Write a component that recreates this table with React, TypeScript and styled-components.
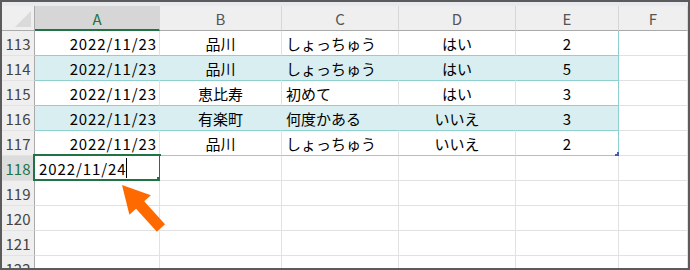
import styled, { createGlobalStyle } from 'styled-components';

const GlobalStyle = createGlobalStyle`
  html, body {
    margin: 0;
    padding: 0;
    background: #fff;
  }
  * {
    box-sizing: border-box;
  }
`;

const GREEN = '#217346';
const TEAL = '#8ecfcf';
const BAND = '#d9eef0';
const GRID = '#e1e1e1';

const Frame = styled.div`
  position: relative;
  width: 690px;
  height: 270px;
  border: 2px solid #5b5b5b;
  overflow: hidden;
  background: #fff;
  font-family: 'Noto Sans CJK JP', 'Noto Sans', sans-serif;
`;

const Strip = styled.div`
  height: 4px;
  background: #e7e9ee;
`;

const Sheet = styled.div`
  display: grid;
  grid-template-columns: 33px 125px 122px 117px 117px 103px 69px;
  grid-auto-rows: 25px;
`;

const Corner = styled.div`
  position: relative;
  background: #efefef;
  border-right: 1px solid #a9a9a9;
  border-bottom: 1px solid #a9a9a9;

  &::after {
    content: '';
    position: absolute;
    right: 3px;
    bottom: 3px;
    width: 16px;
    height: 16px;
    background: #dadada;
    clip-path: polygon(100% 0, 100% 100%, 0 100%);
  }
`;

const ColHead = styled.div<{ $active?: boolean }>`
  display: flex;
  align-items: center;
  justify-content: center;
  background: ${(p) => (p.$active ? '#d6d6d6' : '#efefef')};
  color: ${(p) => (p.$active ? GREEN : '#555')};
  font-size: 15px;
  border-right: 1px solid #d6d6d6;
  border-bottom: ${(p) => (p.$active ? `2px solid ${GREEN}` : '1px solid #a9a9a9')};
  padding-top: ${(p) => (p.$active ? '1px' : '0')};
`;

const RowHead = styled.div<{ $active?: boolean }>`
  display: flex;
  align-items: center;
  justify-content: center;
  background: ${(p) => (p.$active ? '#dcdcdc' : '#efefef')};
  color: ${(p) => (p.$active ? GREEN : '#444')};
  font-size: 15px;
  border-right: 1px solid #a9a9a9;
  border-bottom: 1px solid #e2e2e2;
`;

type Align = 'left' | 'center' | 'right';

const Cell = styled.div<{
  $align?: Align;
  $band?: boolean;
  $inTable?: boolean;
  $lastCol?: boolean;
}>`
  position: relative;
  display: flex;
  align-items: center;
  justify-content: ${(p) =>
    p.$align === 'right' ? 'flex-end' : p.$align === 'center' ? 'center' : 'flex-start'};
  padding: ${(p) => (p.$align === 'right' ? '0 2px 0 0' : p.$align === 'left' ? '0 0 0 4px' : '0')};
  font-size: 15px;
  color: #000;
  white-space: nowrap;
  background: ${(p) => (p.$band ? BAND : '#fff')};
  border-right: 1px solid
    ${(p) => (p.$lastCol ? TEAL : p.$band ? BAND : GRID)};
  border-bottom: 1px solid ${(p) => (p.$inTable ? TEAL : GRID)};
`;

const Digits = styled.span`
  letter-spacing: 0.9px;
`;

const Selection = styled.div`
  position: absolute;
  top: -2px;
  left: -2px;
  right: -2px;
  bottom: -1px;
  border: 2px solid ${GREEN};
  pointer-events: none;
`;

const FillHandle = styled.div`
  position: absolute;
  right: -3px;
  bottom: -3px;
  width: 5px;
  height: 5px;
  background: ${GREEN};
`;

const Caret = styled.span`
  display: inline-block;
  width: 1px;
  height: 20px;
  margin-left: 0;
  background: #000;
`;

const ResizeHandle = styled.div`
  position: absolute;
  right: -1px;
  bottom: -1px;
  width: 4px;
  height: 4px;
  background: #4a5aad;
  clip-path: polygon(100% 0, 100% 100%, 0 100%, 0 50%, 50% 50%, 50% 0);
`;

const Overlay = styled.svg`
  position: absolute;
  left: 0;
  top: 0;
  pointer-events: none;
`;

const columns = ['A', 'B', 'C', 'D', 'E', 'F'];

const records = [
  { n: 113, date: '2022/11/23', place: '品川', visits: 'しょっちゅう', ok: 'はい', score: '2' },
  { n: 114, date: '2022/11/23', place: '品川', visits: 'しょっちゅう', ok: 'はい', score: '5' },
  { n: 115, date: '2022/11/23', place: '恵比寿', visits: '初めて', ok: 'はい', score: '3' },
  { n: 116, date: '2022/11/23', place: '有楽町', visits: '何度かある', ok: 'いいえ', score: '3' },
  { n: 117, date: '2022/11/23', place: '品川', visits: 'しょっちゅう', ok: 'いいえ', score: '2' },
];

const emptyRows = [119, 120, 121, 122];

// orange pointer aimed at the edited cell
const Arrow = () => (
  <Overlay width={686} height={266} viewBox='2 2 686 266'>
    <g transform='translate(122 185) rotate(47.8)'>
      <polygon
        points='0,0 27,-14.5 27,-5.5 58,-5.5 58,5.5 27,5.5 27,14.5'
        fill='#ff6a00'
      />
    </g>
  </Overlay>
);

const App = () => {
  return (
    <>
      <GlobalStyle />
      <Frame>
        <Strip />
        <Sheet>
          <Corner />
          {columns.map((c) => (
            <ColHead key={c} $active={c === 'A'}>
              {c}
            </ColHead>
          ))}

          {records.map((r, i) => {
            const band = i % 2 === 1;
            return [
              <RowHead key={`h${r.n}`}>{r.n}</RowHead>,
              <Cell key={`a${r.n}`} $align='right' $band={band} $inTable>
                <Digits>{r.date}</Digits>
              </Cell>,
              <Cell key={`b${r.n}`} $align='center' $band={band} $inTable>
                {r.place}
              </Cell>,
              <Cell key={`c${r.n}`} $align='left' $band={band} $inTable>
                {r.visits}
              </Cell>,
              <Cell key={`d${r.n}`} $align='center' $band={band} $inTable>
                {r.ok}
              </Cell>,
              <Cell key={`e${r.n}`} $align='center' $band={band} $inTable $lastCol>
                {r.score}
                {i === records.length - 1 && <ResizeHandle />}
              </Cell>,
              <Cell key={`f${r.n}`} />,
            ];
          })}

          <RowHead $active>118</RowHead>
          <Cell $align='left'>
            <Digits>2022/11/24</Digits>
            <Caret />
            <Selection>
              <FillHandle />
            </Selection>
          </Cell>
          <Cell />
          <Cell />
          <Cell />
          <Cell />
          <Cell />

          {emptyRows.map((n) => [
            <RowHead key={`h${n}`}>{n}</RowHead>,
            ...columns.map((c) => <Cell key={`${c}${n}`} />),
          ])}
        </Sheet>
        <Arrow />
      </Frame>
    </>
  );
};

export default App;
